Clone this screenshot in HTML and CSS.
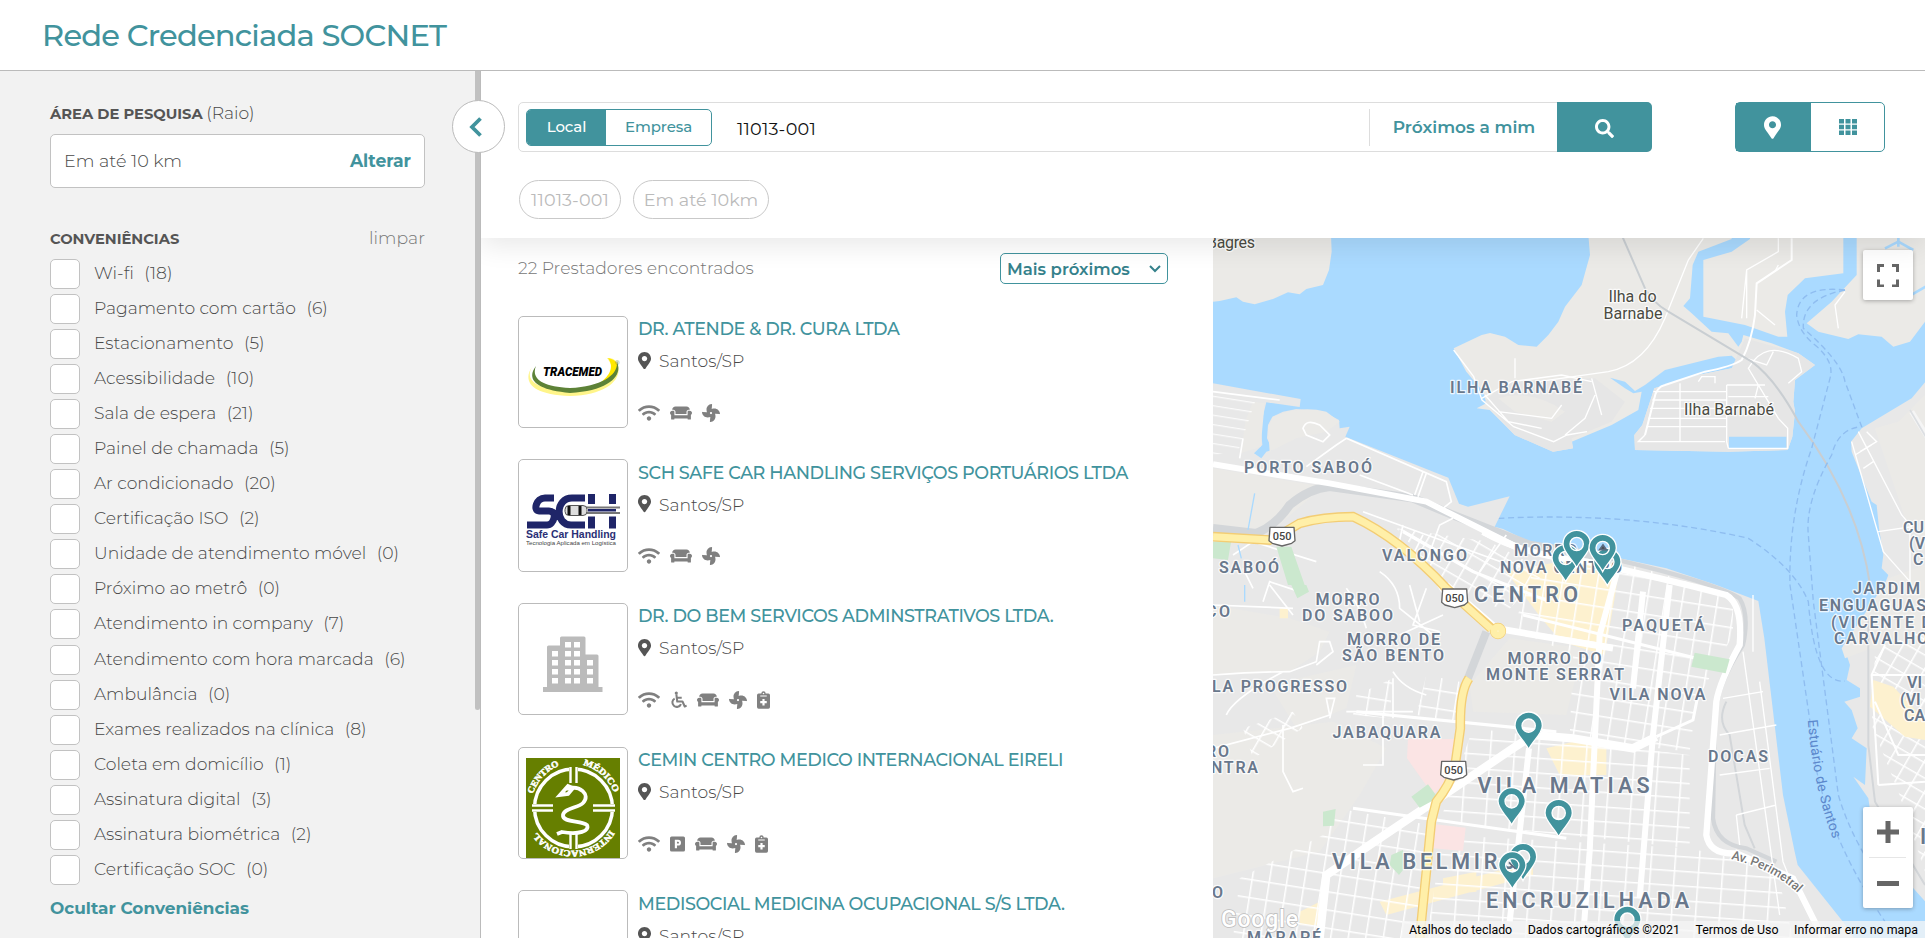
FILE: index.html
```html
<!DOCTYPE html>
<html lang="pt-BR">
<head>
<meta charset="utf-8">
<title>Rede Credenciada SOCNET</title>
<link rel="stylesheet" href="styles.css">
</head>
<body>
<svg class="defs" aria-hidden="true">
  <symbol id="i-pin" viewBox="0 0 384 512"><path d="M172.268 501.67C26.97 291.031 0 269.413 0 192 0 85.961 85.961 0 192 0s192 85.961 192 192c0 77.413-26.97 99.031-172.268 309.67-9.535 13.774-29.93 13.773-39.464 0zM192 272c44.183 0 80-35.817 80-80s-35.817-80-80-80-80 35.817-80 80 35.817 80 80 80z"/></symbol>
  <symbol id="i-wifi" viewBox="0 0 640 512"><path d="M634.91 154.88C457.74-8.99 182.19-8.93 5.09 154.88c-6.66 6.16-6.79 16.59-.35 22.98l34.24 33.97c6.14 6.1 16.02 6.23 22.4.38 145.92-133.68 371.3-133.71 517.25 0 6.38 5.85 16.26 5.71 22.4-.38l34.24-33.97c6.43-6.39 6.3-16.82-.36-22.98zM320 352c-35.35 0-64 28.65-64 64s28.65 64 64 64 64-28.65 64-64-28.65-64-64-64zm202.67-83.59c-115.26-101.93-290.21-101.82-405.34 0-6.9 6.1-7.12 16.69-.57 23.15l34.44 33.99c6 5.92 15.66 6.32 22.05.8 83.95-72.57 209.74-72.41 293.49 0 6.39 5.52 16.05 5.13 22.05-.8l34.44-33.99c6.56-6.46 6.33-17.06-.56-23.15z"/></symbol>
  <symbol id="i-couch" viewBox="0 0 640 512"><path d="M160 224v64h320v-64c0-35.3 28.7-64 64-64h32c0-53-43-96-96-96H160c-53 0-96 43-96 96h32c35.3 0 64 28.7 64 64zm416-32h-32c-17.7 0-32 14.3-32 32v96H128v-96c0-17.7-14.3-32-32-32H64c-35.3 0-64 28.7-64 64 0 23.6 13 44 32 55.1V432c0 8.8 7.2 16 16 16h64c8.8 0 16-7.2 16-16v-16h384v16c0 8.8 7.2 16 16 16h64c8.8 0 16-7.2 16-16V311.1c19-11.1 32-31.5 32-55.1 0-35.3-28.7-64-64-64z"/></symbol>
  <symbol id="i-fan" viewBox="0 0 512 512"><path d="M352.57 128c-28.09 0-54.09 4.52-77.06 12.86l12.41-123.11C289 7.31 279.81-1.18 269.33.13 189.63 10.13 128 77.64 128 159.43c0 28.09 4.52 54.09 12.86 77.06L17.75 224.08C7.31 223-1.18 232.19.13 242.67c10 79.7 77.51 141.33 159.3 141.33 28.09 0 54.09-4.52 77.06-12.86l-12.41 123.11c-1.05 10.43 8.11 18.93 18.59 17.62 79.7-10 141.33-77.51 141.33-159.3 0-28.09-4.52-54.09-12.86-77.06l123.11 12.41c10.44 1.05 18.93-8.11 17.62-18.59-10-79.7-77.51-141.33-159.3-141.33zM256 288a32 32 0 1 1 32-32 32 32 0 0 1-32 32z"/></symbol>
  <symbol id="i-wheel" viewBox="0 0 512 512"><circle cx="190" cy="48" r="48"/><g fill="none" stroke="currentColor" stroke-width="62" stroke-linejoin="round"><path d="M192 90l26 212h158l68 150 58-26M205 190h148"/><path d="M140 212a134 134 0 1 0 190 166"/></g></symbol>
  <symbol id="i-park" viewBox="0 0 448 512"><path fill-rule="evenodd" d="M48 32h352a48 48 0 0 1 48 48v352a48 48 0 0 1-48 48H48a48 48 0 0 1-48-48V80a48 48 0 0 1 48-48zM144 128v256h64v-80h32a88 88 0 0 0 0-176zm64 60h32a28 28 0 0 1 0 56h-32z"/></symbol>
  <symbol id="i-clip" viewBox="0 0 384 512"><path fill-rule="evenodd" d="M336 64h-80a64 64 0 0 0-128 0H48a48 48 0 0 0-48 48v352a48 48 0 0 0 48 48h288a48 48 0 0 0 48-48V112a48 48 0 0 0-48-48zM192 40a24 24 0 1 1 0 48 24 24 0 0 1 0-48zM96 124h192v28H96zm192 228h-64v64h-64v-64H96v-64h64v-64h64v64h64z"/></symbol>
  <symbol id="i-search" viewBox="0 0 512 512"><path fill-rule="evenodd" d="M505 442.700L405.300 343c-4.500-4.500-10.600-7-17-7H372c27.600-35.300 44-79.700 44-128C416 93.100 322.900 0 208 0S0 93.100 0 208s93.100 208 208 208c48.300 0 92.700-16.400 128-44v16.300c0 6.400 2.500 12.500 7 17l99.700 99.700c9.400 9.400 24.600 9.400 33.900 0l28.300-28.300c9.400-9.400 9.400-24.600.1-34zM208 336c-70.700 0-128-57.200-128-128 0-70.700 57.200-128 128-128 70.700 0 128 57.200 128 128 0 70.700-57.200 128-128 128z"/></symbol>
</svg>

<header class="header"><h1 class="title">Rede Credenciada SOCNET</h1></header>
<div class="body">
  <aside class="sidebar">
    <div class="side-head"><span><b class="side-label area">ÁREA DE PESQUISA</b> <span class="raio">(Raio)</span></span></div>
    <div class="radius"><span class="radius-value">Em até 10 km</span><a class="link alterar">Alterar</a></div>
    <div class="side-head conv"><b class="side-label">CONVENIÊNCIAS</b><a class="clear">limpar</a></div>
    <ul class="checks">
      <li><i></i><span>Wi-fi</span><span>(18)</span></li>
      <li><i></i><span>Pagamento com cartão</span><span>(6)</span></li>
      <li><i></i><span>Estacionamento</span><span>(5)</span></li>
      <li><i></i><span>Acessibilidade</span><span>(10)</span></li>
      <li><i></i><span>Sala de espera</span><span>(21)</span></li>
      <li><i></i><span>Painel de chamada</span><span>(5)</span></li>
      <li><i></i><span>Ar condicionado</span><span>(20)</span></li>
      <li><i></i><span>Certificação ISO</span><span>(2)</span></li>
      <li><i></i><span>Unidade de atendimento móvel</span><span>(0)</span></li>
      <li><i></i><span>Próximo ao metrô</span><span>(0)</span></li>
      <li><i></i><span>Atendimento in company</span><span>(7)</span></li>
      <li><i></i><span>Atendimento com hora marcada</span><span>(6)</span></li>
      <li><i></i><span>Ambulância</span><span>(0)</span></li>
      <li><i></i><span>Exames realizados na clínica</span><span>(8)</span></li>
      <li><i></i><span>Coleta em domicílio</span><span>(1)</span></li>
      <li><i></i><span>Assinatura digital</span><span>(3)</span></li>
      <li><i></i><span>Assinatura biométrica</span><span>(2)</span></li>
      <li><i></i><span>Certificação SOC</span><span>(0)</span></li>
    </ul>
    <a class="link hide">Ocultar Conveniências</a>
    <div class="scrollbar"></div>
    <button class="collapse"><svg width="14" height="22" viewBox="0 0 14 22"><path d="M11.500 2.500L3 11l8.500 8.500" fill="none" stroke="#41939d" stroke-width="3.800"/></svg></button>
  </aside>

  <main class="main">
    <div class="toolbar">
      <div class="search-row">
        <div class="search">
          <div class="seg"><span class="seg-item on">Local</span><span class="seg-item">Empresa</span></div>
          <span class="query">11013-001</span>
          <a class="link near">Próximos a mim</a>
          <button class="go"><svg width="19" height="19"><use href="#i-search"/></svg></button>
        </div>
        <div class="views">
          <span class="view on"><svg width="17" height="23"><use href="#i-pin"/></svg></span>
          <span class="view"><svg width="18" height="16" viewBox="0 0 18 16"><path d="M0 0h5v4.400H0zM6.500 0h5v4.400h-5zM13 0h5v4.400h-5zM0 5.800h5v4.400H0zM6.500 5.800h5v4.400h-5zM13 5.800h5v4.400h-5zM0 11.600h5V16H0zM6.500 11.600h5V16h-5zM13 11.600h5V16h-5z"/></svg></span>
        </div>
      </div>
      <div class="chips"><span class="chip c1">11013-001</span><span class="chip c2">Em até 10km</span></div>
    </div>

    <div class="content">
      <section class="list">
        <div class="list-head"><span class="found">22 Prestadores encontrados</span>
          <span class="sort">Mais próximos<svg width="12" height="8" viewBox="0 0 12 8"><path d="M1 1l5 5 5-5" fill="none" stroke="#35818b" stroke-width="2"/></svg></span></div>

        <article class="card">
          <div class="thumb"><svg width="94" height="94" viewBox="0 0 94 94">
            <path d="M6 38C-3 51 3 66 44 67 82 66 98 49 91 34c-2-4-5-5-10-5 13 16 2 29-37 32C12 61-2 52 6 38z" fill="#fff58a"/>
            <path d="M82 29c5 1 8 3 9 6 3 11-7 17-20 21 12-8 18-17 11-27z" fill="#ffe800"/>
            <path d="M10 37C0 50 9 61 44 64 84 62 97 46 91 33c1 13-15 24-47 26C15 58 5 49 10 37z" fill="#5d8237"/>
            <text x="17" y="47" class="lg-trace" textLength="59" lengthAdjust="spacingAndGlyphs">TRACEMED</text>
            <text x="89" y="36" font-size="6" fill="#5d8237" class="lg">®</text></svg></div>
          <div class="info"><h2 class="name">DR. ATENDE &amp; DR. CURA LTDA</h2>
            <p class="city"><svg width="13" height="17.500"><use href="#i-pin"/></svg>Santos/SP</p>
            <p class="icons"><svg width="22" height="18"><use href="#i-wifi"/></svg><svg width="22" height="18"><use href="#i-couch"/></svg><svg width="18" height="18"><use href="#i-fan"/></svg></p></div>
        </article>

        <article class="card">
          <div class="thumb"><svg width="94" height="94" viewBox="0 0 94 94">
            <g fill="none" stroke="#1f2568" stroke-width="7"><path d="M28 25h-9c-9 0-12 13-6 13h10c9 0 5 14-2 14H1M59 25H46c-17 0-17 27-1 27h14M65.500 21v34.500M86.500 21v34.500M65 38h21"/></g>
            <path d="M60 33.500h34M60 41h34" stroke="#fff" stroke-width="5"/><path d="M60 34.500h34M60 40h34" stroke="#777" stroke-width="1.800"/>
            <rect x="39" y="32.500" width="22" height="10" rx="4" fill="#ddd" stroke="#555"/><path d="M43 33v9M54 33v9" stroke="#111" stroke-width="3"/>
            <text x="0" y="65" class="lg-sch" textLength="90" lengthAdjust="spacingAndGlyphs">Safe Car Handling</text>
            <text x="0" y="72" class="lg-tiny" textLength="90" lengthAdjust="spacingAndGlyphs">Tecnologia Aplicada em Logística</text></svg></div>
          <div class="info"><h2 class="name">SCH SAFE CAR HANDLING SERVIÇOS PORTUÁRIOS LTDA</h2>
            <p class="city"><svg width="13" height="17.500"><use href="#i-pin"/></svg>Santos/SP</p>
            <p class="icons"><svg width="22" height="18"><use href="#i-wifi"/></svg><svg width="22" height="18"><use href="#i-couch"/></svg><svg width="18" height="18"><use href="#i-fan"/></svg></p></div>
        </article>

        <article class="card">
          <div class="thumb"><svg width="94" height="94" viewBox="0 0 94 94">
            <path d="M17 75v-5h4V30q0-1.500 1.500-1.500H34V21q0-1.500 1.500-1.500H58q1.500 0 1.500 1.500v16.500H71q1.500 0 1.500 1.500v31h4v5z" fill="#bbb"/>
            <path fill="#fff" d="M26 34h6v5.500h-6zM26 43h6v5.500h-6zM26 52h6v5.500h-6zM26 61h6v5.500h-6zM39 25h6v5.500h-6zM48 25h6v5.500h-6zM39 34h6v5.500h-6zM48 34h6v5.500h-6zM39 43h6v5.500h-6zM48 43h6v5.500h-6zM39 52h6v5.500h-6zM48 52h6v5.500h-6zM39 61h6v5.500h-6zM48 61h6v5.500h-6zM61 43h6v5.500h-6zM61 52h6v5.500h-6zM61 61h6v5.500h-6z"/></svg></div>
          <div class="info"><h2 class="name">DR. DO BEM SERVICOS ADMINSTRATIVOS LTDA.</h2>
            <p class="city"><svg width="13" height="17.500"><use href="#i-pin"/></svg>Santos/SP</p>
            <p class="icons"><svg width="22" height="18"><use href="#i-wifi"/></svg><svg width="17" height="18"><use href="#i-wheel"/></svg><svg width="22" height="18"><use href="#i-couch"/></svg><svg width="18" height="18"><use href="#i-fan"/></svg><svg width="13" height="18"><use href="#i-clip"/></svg></p></div>
        </article>

        <article class="card">
          <div class="thumb low"><svg width="94" height="100" viewBox="0 0 94 100">
            <path d="M0 0h94v100H0z" fill="#667f00"/>
            <g fill="none" stroke="#fff"><circle cx="47.500" cy="50" r="39" stroke-width="3.500"/></g>
            <path d="M43 9h9v16h-9zM43 75h9v16h-9zM6 46h21v8H6zM67 46h22v8H67z" fill="#667f00"/>
            <path d="M44.500 9v16M50.500 9v16M44.500 75v16M50.500 75v16M6 47.500h21M6 52.500h21M67 47.500h22M67 52.500h22" stroke="#fff" stroke-width="2.400"/>
            <path d="M34 37l8-9 5 2-5 6zM40 31c14-5 25 6 17 14-5 5-19 5-20 12-1 8 19 5 24 10 3 6-8 10-25 7l-5 2" fill="none" stroke="#fff" stroke-width="3.800"/>
            <path id="arcT1" d="M7 36A45 45 0 0 1 35 7" fill="none"/><path id="arcT2" d="M57 7A45 45 0 0 1 89 38" fill="none"/>
            <text class="lg-cem"><textPath href="#arcT1" textLength="40" lengthAdjust="spacingAndGlyphs">CENTRO</textPath></text>
            <text class="lg-cem"><textPath href="#arcT2" textLength="43" lengthAdjust="spacingAndGlyphs">MÉDICO</textPath></text>
            <path id="arcI" d="M84 72A44 44 0 0 1 10 73" fill="none"/>
            <text class="lg-cem"><textPath href="#arcI" textLength="86" lengthAdjust="spacingAndGlyphs">INTERNACIONAL</textPath></text></svg></div>
          <div class="info"><h2 class="name">CEMIN CENTRO MEDICO INTERNACIONAL EIRELI</h2>
            <p class="city"><svg width="13" height="17.500"><use href="#i-pin"/></svg>Santos/SP</p>
            <p class="icons"><svg width="22" height="18"><use href="#i-wifi"/></svg><svg width="15" height="18"><use href="#i-park"/></svg><svg width="22" height="18"><use href="#i-couch"/></svg><svg width="18" height="18"><use href="#i-fan"/></svg><svg width="13" height="18"><use href="#i-clip"/></svg></p></div>
        </article>

        <article class="card">
          <div class="thumb"></div>
          <div class="info"><h2 class="name">MEDISOCIAL MEDICINA OCUPACIONAL S/S LTDA.</h2>
            <p class="city"><svg width="13" height="17.500"><use href="#i-pin"/></svg>Santos/SP</p></div>
        </article>
      </section>

      <section class="map">
        <svg class="map-canvas" width="712" height="700" viewBox="1213 238 712 700">
          <defs>
            <pattern id="g1" width="52" height="54" patternUnits="userSpaceOnUse" patternTransform="rotate(9)"><path d="M0 2h52M2 0v54" stroke="#fff" stroke-width="5"/></pattern>
            <pattern id="g2" width="72" height="44" patternUnits="userSpaceOnUse" patternTransform="rotate(4)"><path d="M0 2h72M2 0v44" stroke="#fff" stroke-width="5"/></pattern>
            <pattern id="g3" width="46" height="40" patternUnits="userSpaceOnUse" patternTransform="rotate(30)"><path d="M0 2h46M2 0v40" stroke="#fff" stroke-width="5"/></pattern>
            <pattern id="g4" width="60" height="28" patternUnits="userSpaceOnUse" patternTransform="rotate(9)"><path d="M0 2h60" stroke="#fff" stroke-width="3"/></pattern>
            <g id="mk"><path fill-rule="evenodd" d="M0 0C-12-26-41-46-41-71A41 41 0 0 1 41-71C41-46 12-26 0 0zM0-91a20 20 0 1 0 0 40 20 20 0 0 0 0-40z" fill="#41939d" stroke="#fff" stroke-width="4"/></g>
            <g id="shield"><path d="M-36-26h72l3 40-10 8-29 8-29-8-10-8z" fill="#fff" stroke="#666" stroke-width="4" stroke-linejoin="round"/><text y="12" class="sh">050</text></g>
          </defs>
          <rect x="1213" y="238" width="712" height="700" fill="#aadaff"/>
          <!-- islands and east shore -->
          <g transform="translate(1565 235) scale(.33333)">
            <path fill="#ebeae7" d="M24 640L-36 650-151 600-226 525-265 520-236 505-245 470-296 410-334 340-250 300-225 294-180 305-140 330-85 335-50 300-20 260 0 215 50 150 75 60 70 0 500 0 500 12 400 50 383 90 375 190 355 213 380 235 440 290 490 295 520 335 530 320 535 300 620 325 700 355 750 390 690 435 685 500 690 530 682 605 668 645 490 650 210 645 208 600 232 570 268 460 400 420 500 400 520 380 500 362 460 365 300 405 240 450 210 468 180 440 135 428 180 460 205 475 230 470 220 525 140 570 20 620z"/>
            <path fill="#e6e6e6" d="M540 310L700 355 750 390 690 435 685 500 690 530 682 605 668 645 490 650 210 645 208 600 232 570 268 460 400 420 500 400zM-240 500L-180 440 90 430 180 500 140 560 20 610 24 640-36 650-151 600z"/>
            <path fill="#ebeae7" d="M-200 490Q-100 460 0 530L-40 560-150 530zM555 0L555 12 500 50 415 75 415 245 540 270 640 305 667 305 660 230 668 180 720 130 835 115 835 0zM875 0V120L800 200 725 265 760 290 850 312 880 298 950 305 985 335 1035 320 1080 260V0z"/>
            <path d="M1090 150l-60 35M960 40l40-20 45 25M1000 5v30" stroke="#aadaff" stroke-width="8" fill="none"/>
            <path fill="#e8e8e8" d="M1090 430L1040 490 890 580 858 620 860 650 920 800 935 810 942 880 955 960 950 1000 970 1020 900 1200 835 1230 855 1290 845 1335 885 1360 885 1385 838 1400 860 1425 878 1480 860 1510 905 1540 900 1650 865 1625 910 1690 920 1760 1045 1960 1090 2010z"/>
            <path fill="#ebeae7" d="M1090 470L1000 560 930 580 1020 850 1090 950zM970 1030l110-40v250l-160 0-80 30-10-30z"/>
            <path fill="#aadaff" d="M492 605h172v35H492z"/>
            <g fill="none" stroke="#fff" stroke-width="4">
              <path d="M415 10L370 75 300 250Q240 390 130 410L-80 440M640 10V50L545 105 530 250M545 105v145M640 90l-8 15M575 225l55 45M240 600L220 620H480M490 640H668V580L640 550 550 400Q600 310 700 370L710 410 670 445M345 445V620M265 470H485M262 495H485M255 520H485M250 550H485M245 575H485M485 450H600M490 485H610M485 450V620L490 640M580 450l-10 40M545 370l60 20 20-40M400 440l10-15h40v20"/>
              <path d="M680 10V75L575 145 570 240Q560 320 530 375 500 395 420 410L300 450Q275 455 268 490L240 600" stroke-width="6"/>
              <path d="M-334 345l60 80 25 70 95 80 120 45 40-20 60-10M-240 480l70 80 100 20M-250 490l90-50 150-20 90 20M-150 430v-60M-200 530l160 20 30-40M80 430l30 110M0 600l60-50 30-70"/>
              <path d="M880 590l130 250 30 35-100 15M860 620l95 330 80 90M870 660l50-30M895 700l30-20M905 590l30 30-50 30M1035 880v170"/>
              <path d="M840 170l-30 40 10 70"/>
            </g>
            <path d="M170 0L240 160Q260 200 310 230L560 380Q630 430 700 560 880 800 915 1050" fill="none" stroke="#c9ced2" stroke-width="6"/>
            <path d="M1040 530l50 80" stroke="#f5f5f5" stroke-width="16"/><path d="M1035 525l50 85" stroke="#dcdfe2" stroke-width="5"/>
            <g fill="none" stroke="#8fbdf0" stroke-width="4" stroke-dasharray="18 11">
              <path d="M840 165Q700 150 695 240 700 290 750 330 810 380 795 430L740 640Q670 840 675 1050L735 1460"/>
              <path d="M840 165Q710 190 715 280 830 380 840 440L890 575Q820 580 800 660 720 800 730 900L745 1100 820 1680Q870 1850 1000 2000"/>
              <path d="M-200 850Q200 830 550 910 690 1000 730 1100 750 1350 840 1338M735 1460Q750 1750 960 2060"/>
            </g>
          </g>
          <!-- Santos -->
          <g transform="translate(1213 235) scale(.33333)">
            <path fill="#ebeae7" d="M0 0H354L356 50 348 105 330 150 280 162 260 178 225 172 180 192 125 208 90 200 70 187 20 198 0 200z"/>
            <path fill="#e8e8e8" d="M0 445L263 492 260 516 160 502 143 570 148 630 123 655 145 670 160 650 178 645 162 610 165 570 178 545 210 530 250 522 330 530 378 555 380 580 410 575 397 605 706 728 738 806 765 815 890 784 845 875 870 882 945 918 1056 950 1220 970 1360 1000 1510 1050 1636 1098 1654 1210 1710 1680 1745 1850 1754 1890 1890 2060 1930 2120H0z"/>
            <path fill="#ebeae7" d="M180 545Q260 510 340 530L380 560 340 590 250 610 170 650 165 580zM0 700L330 755 180 885 0 890zM120 500l35 5-12 130-60 20 15-100z"/>
            <path fill="#ebeae7" d="M0 1110L230 1150 350 1190 320 1250 230 1310 0 1320zM0 1500L360 1460 520 1540 440 1680 320 1850 0 1930zM890 1210L1110 1240 1060 1440 780 1430 770 1350zM170 1350L430 1290 400 1420 250 1480z"/>
            <path fill="#fdf1cf" d="M880 1010l160-30 180 10-15 100-30 170-130-40-60-70zM1000 1540l80-20 100 20v80l-140 0zM500 2000l460-120 0 40-440 120zM260 2030l60-30-5 70-55 0zM690 1930l100-20v60l-100 10zM200 1120h25v30h-25z"/>
            <g stroke="none">
              <path fill="url(#g1)" d="M370 1720L650 1770 620 2110H60L80 1930 330 1800z"/>
              <path fill="url(#g2)" d="M690 1800L1430 1840 1690 1900 1740 2110H640z"/>
              <path fill="url(#g2)" d="M780 1480L1430 1560 1430 1840 680 1760z"/>
              <path fill="url(#g1)" d="M960 1010L1220 980 1560 1080 1560 1200 1450 1400 1430 1550 1070 1510 1080 1260 900 1180z"/>
              <path fill="url(#g1)" d="M430 1380L540 1330 530 1450 420 1440zM640 1320l100 20-10 120-120-20z"/>
              <path fill="url(#g3)" d="M550 880L830 920 1000 1010 880 1130 700 1050zM90 1480l150-50 30 50-150 90z"/>
              <path fill="url(#g4)" d="M0 465L130 490 75 650 0 660z"/>
            </g>
            <path fill="#fbe4e4" d="M585 1512H725L700 1640 660 1680 582 1570zM668 1768l90 10-8 70-90-8z"/>
            <g fill="none" stroke="#d3d6d9">
              <path d="M0 880L130 895Q190 870 230 810 290 760 350 755L600 790 720 840 950 930 1170 965" stroke-width="26"/>
              <path d="M1170 965Q1500 1040 1580 1090 1610 1140 1590 1230 1510 1350 1505 1450L1500 1750Q1510 1830 1600 1840L1690 1880" stroke-width="13"/>
              <path d="M820 1190L765 1330" stroke-width="24"/>
              <path d="M1540 1400q-30 60 10 100l45 270 30 70" stroke-width="6"/>
            </g>
            <g fill="none" stroke="#fff">
              <path d="M0 688L350 745 640 800 930 945" stroke-width="18"/>
              <path d="M810 890Q930 960 1120 980 1350 1030 1540 1080 1590 1110 1580 1230 1520 1340 1510 1400L1495 1600 1480 1800Q1490 1860 1570 1855L1740 1930 1830 2110" stroke-width="19"/>
              <path d="M930 945L810 890M700 1050L850 1180 1200 1240" stroke-width="20"/>
              <path d="M320 2110L340 1920 470 1830 900 1540 960 1500 1080 1510 1260 1540 1330 1505" stroke-width="25"/>
              <path d="M948 1540L890 2060M1215 1000L1160 1200 1130 1850 1110 2110M1370 1050L1320 1500 1280 1990M1290 1070L1260 1360" stroke-width="18"/>
              <path d="M570 890l210 120 230 90M430 1430l600 60M930 1140l520 130M420 1720l640 90M1330 1505l110-50 20-100" stroke-width="9"/>
              <path d="M400 610L700 740 715 800 690 820M280 695L370 630 400 610M270 580Q280 550 320 570L350 600 330 620 280 600zM450 830L890 990M440 720L600 780M630 710l-25 70M640 715l-25 70M0 470L200 495M90 610l-10 60M550 960l20-90M600 960l30-60M640 980L680 870 720 850M880 900l-80 110M60 960l60-40 190 60M90 1000l30 60M150 1100l20-60 90 30M170 1050l70 90" stroke-width="5"/>
              <path d="M0 1320Q140 1310 230 1310L310 1280 320 1220 350 1220 360 1250 310 1290M40 1440Q60 1390 210 1310M0 1540L230 1480 350 1440 340 1390 365 1390 350 1450M210 1470l0 140 30 60 30-10M400 1430h200M540 1330v120M510 1440v150h-60M0 1110L240 1120M400 1060q40 50 60 120M500 1010q60 40 60 110l100 80M640 1060l-40 110 80 20M560 1200l130-60M540 1310q30 50 100 70M650 1010l60 100M590 1050l30 110" stroke-width="5"/>
              <path d="M1590 1250l110 790M1640 1340l70 540 20 50M1520 1500l170-30M1520 1620l150-20M1570 1740l120-30M1570 1740l10 90M1530 1390l120-20M1620 1080v170" stroke-width="4"/>
            </g>
            <path fill="#cbe8ce" d="M595 1685l50-37 30 40-55 30zM330 1730l38-8-5 50-33 2zM535 1860l35-15v60l-12 15-28-30zM0 920l55-5-10 60-45-5zM190 935h45l40 115h-50zM235 1050l45 0 8 20-35 20zM1445 1253l105 20-12 42-103-20z"/>
            <g fill="none" stroke="#f3cd74" stroke-width="29"><path d="M0 905L170 915Q220 890 260 865 330 845 420 845 560 910 700 1060L835 1180M768 1330Q740 1370 742 1480L725 1600Q710 1650 670 1700L655 1760 620 2110"/><circle cx="855" cy="1188" r="10"/></g>
            <g fill="none" stroke="#ffefa8" stroke-width="21"><path d="M0 905L170 915Q220 890 260 865 330 845 420 845 560 910 700 1060L835 1182M768 1330Q740 1370 742 1480L725 1600Q710 1650 670 1700L655 1760 620 2110"/><circle cx="855" cy="1188" r="12"/></g>
            <path d="M125 775l-20 110M75 930l10 40M95 1050v50" stroke="#aadaff" stroke-width="4"/>
          </g>
          <g transform="translate(1565 585) scale(.33333)">
            <path fill="url(#g3)" d="M930 200L1080 130V860L1000 620 920 420z"/>
            <path fill="#fdf1cf" d="M925 285l60 20 95 100v60l-60-10-105-90z"/>
            <path d="M910 100V480L930 650 1080 900" stroke="#d3d6d9" stroke-width="6" fill="none"/>
            <path d="M960 180l-40 90 20 330M920 270h160M930 350l70 160h80M940 600l140-10" stroke="#fff" stroke-width="6" fill="none"/>
            <path id="estu" d="M728 405Q745 610 806 768" fill="none"/>
            <text class="wt"><textPath href="#estu" textLength="366">Estuário de Santos</textPath></text>
            <path id="perim" d="M498 822Q620 850 700 925" fill="none"/>
            <text class="rd"><textPath href="#perim" textLength="228">Av. Perimetral</textPath></text>
          </g>
          <g class="pl">
            <text x="1207" y="248" textLength="48">Bagres</text><text x="1608.500" y="302" textLength="48">Ilha do</text><text x="1603.500" y="318.500" textLength="59">Barnabe</text><text x="1684" y="415" textLength="90">Ilha Barnabé</text>
          </g>
          <g class="nb">
            <text x="1450" y="392.500" textLength="132">ILHA BARNABÉ</text><text x="1244" y="473" textLength="128">PORTO SABOÓ</text><text x="1219" y="572.500" textLength="60">SABOÓ</text><text x="1382" y="561" textLength="85">VALONGO</text>
            <text x="1514" y="556" textLength="63">MORRO</text><text x="1500" y="572.500" textLength="122">NOVA CENTRO</text>
            <text x="1622" y="631" textLength="83">PAQUETÁ</text><text x="1315.500" y="604.500" textLength="64">MORRO</text><text x="1302" y="621" textLength="91">DO SABOO</text>
            <text x="1347" y="645" textLength="93">MORRO DE</text><text x="1342" y="661" textLength="102">SÃO BENTO</text><text x="1507.500" y="663.500" textLength="94">MORRO DO</text><text x="1486" y="680" textLength="138">MONTE SERRAT</text>
            <text x="1609.500" y="700" textLength="96">VILA NOVA</text><text x="1206" y="617" textLength="24">CO</text><text x="1212" y="692" textLength="135">LA PROGRESSO</text><text x="1206" y="757" textLength="23">RO</text><text x="1211" y="773" textLength="47">NTRA</text>
            <text x="1332.500" y="738" textLength="108">JABAQUARA</text><text x="1708" y="762" textLength="60">DOCAS</text><text x="1212" y="898" textLength="12">O</text><text x="1247" y="943" textLength="74">MARAPÉ</text>
            <text x="1903" y="533">CU</text><text x="1909" y="549">(V</text><text x="1913" y="565">C</text><text x="1853" y="594" textLength="67">JARDIM</text><text x="1819" y="611" textLength="107">ENGUAGUAS</text><text x="1831" y="627.500" textLength="101">(VICENTE D</text><text x="1834" y="643.500" textLength="94">CARVALHO</text>
            <text x="1907" y="688">VI</text><text x="1900" y="705">(VI</text><text x="1904" y="721">CA</text>
          </g>
          <g class="nb big">
            <text x="1474" y="602" textLength="104">CENTRO</text><text x="1477.500" y="793" textLength="172">VILA MATIAS</text><text x="1332" y="869" textLength="184">VILA BELMIRO</text><text x="1486" y="908" textLength="203">ENCRUZILHADA</text><text x="1920" y="844">I</text>
          </g>
          <text x="1221" y="927" class="goog" textLength="77">Google</text>
          <g transform="translate(1213 235) scale(.33333)">
            <use href="#shield" x="207" y="903"/><use href="#shield" x="725" y="1088"/><use href="#shield" x="722" y="1605"/>
            <use href="#mk" x="1058" y="1040"/><use href="#mk" x="1183" y="1052"/><use href="#mk" x="1091" y="998"/><use href="#mk" x="1169" y="1010"/>
            <use href="#mk" x="947" y="1543"/><use href="#mk" x="896" y="1770"/><use href="#mk" x="1037" y="1805"/><use href="#mk" x="930" y="1937"/><use href="#mk" x="898" y="1962"/><use href="#mk" x="1243" y="2125"/>
            <path d="M888 1882l20 20M1160 944h20l-10-14z" stroke="#5c6b80" stroke-width="5"/>
          </g>
        </svg>
        <button class="ctl full"><svg width="22" height="23" viewBox="0 0 22 23"><path d="M7 1.500H1.500V8M15 1.500h5.500V8M1.500 15.500V22H7M20.500 15.500V22H15" fill="none" stroke="#666" stroke-width="3"/></svg></button>
        <div class="ctl zoom"><svg width="50" height="101" viewBox="0 0 50 101"><path d="M14 25h22M25 14v22M14 76.500h22" stroke="#666" stroke-width="5"/><path d="M6 50.500h37" stroke="#e6e6e6"/></svg></div>
        <div class="attrib"><span>Atalhos do teclado</span><span>Dados cartográficos ©2021</span><span>Termos de Uso</span><span>Informar erro no mapa</span></div>
      </section>
    </div>
  </main>
</div>
</body>
</html>
```
FILE: styles.css
```css
* { box-sizing: border-box; }
body { margin: 0; width: 1925px; height: 938px; overflow: hidden; background: #fff; color: #484848; font-family: Montserrat, Inter, "Open Sans", sans-serif; font-size: 17.200px; font-weight: 300; }
h1, h2, p, ul { margin: 0; padding: 0; font-weight: inherit; }
button { padding: 0; border: 0; }
svg { display: block; fill: currentColor; flex: none; }
.defs { position: absolute; width: 0; height: 0; }

.header { height: 71px; border-bottom: 1px solid #bbb; padding-left: 42px; }
.title { font-size: 30.500px; line-height: 71px; font-weight: 500; color: #41939d; letter-spacing: -.77px; }
.body { display: flex; height: 867px; }

.sidebar { position: relative; width: 481px; padding: 28px 55px 0 50px; background: #f2f2f2; border-right: 1px solid #bbb; }
.side-head { display: flex; justify-content: space-between; align-items: baseline; height: 28px; line-height: 28px; white-space: nowrap; }
.side-label { font-size: 14.700px; font-weight: 700; color: #555; }
.raio { font-size: 17.200px; margin-left: -1px; }
.radius { display: flex; justify-content: space-between; align-items: center; height: 54px; margin-top: 7px; padding: 0 13px 1px; line-height: 20px; background: #fff; border: 1px solid #c2c2c2; border-radius: 5px; }
.radius-value { font-size: 17.600px; }
.link { color: #41939d; font-weight: 700; }
.conv { margin-top: 36px; }
.clear { color: #777; font-size: 17.300px; }
.checks { list-style: none; margin-top: 7px; }
.checks li { display: flex; height: 35.060px; line-height: 27px; white-space: nowrap; }
.checks i { width: 30px; height: 30px; margin-right: 14px; background: #fff; border: 1px solid #c2c2c2; border-radius: 5px; }
.checks span + span { margin-left: 10.500px; }
.hide { display: block; line-height: 36px; font-size: 16.900px; }
.scrollbar { position: absolute; top: 0; right: 0; width: 5px; height: 639px; background: #c1c1c1; border-radius: 0 0 3px 3px; }
.collapse { position: absolute; z-index: 3; top: 29px; right: -25px; width: 53px; height: 53px; display: flex; align-items: center; justify-content: center; background: #fff; border: 1px solid #bbb; border-radius: 50%; padding-right: 6px; }

.main { flex: 1; display: flex; flex-direction: column; min-width: 0; }
.toolbar { position: relative; z-index: 2; height: 167px; padding: 31px 40px 0 37px; background: #fff; box-shadow: 0 8px 25px rgba(0,0,0,.09); clip-path: inset(0 0 -40px 0); }
.search-row { display: flex; justify-content: space-between; }
.search { display: flex; width: 1134px; height: 50px; border: 1px solid #ddd; border-radius: 5px; align-items: center; }
.seg { display: flex; width: 186px; height: 37px; margin-left: 7px; border: 1px solid #41939d; border-radius: 5px; overflow: hidden; font-size: 15px; font-weight: 500; line-height: 34px; color: #41939d; text-align: center; }
.seg-item { flex: 1 1 104px; letter-spacing: -.1px; }
.seg-item.on { flex: 0 0 79px; background: #41939d; color: #fff; }
.query { flex: 1; margin-left: 25px; padding-top: 3px; color: #111; font-size: 17.600px; font-weight: 400; letter-spacing: .2px; }
.near { width: 189px; height: 37px; line-height: 36px; border-left: 1px solid #ddd; text-align: center; font-size: 17px; font-weight: 600; }
.go { align-self: stretch; width: 95px; margin: -1px; display: flex; align-items: center; justify-content: center; padding-top: 2px; background: #41939d; color: #fff; border-radius: 0 5px 5px 0; }
.views { display: flex; width: 150px; height: 50px; border: 1px solid #41939d; border-radius: 5px; color: #41939d; }
.view { flex: 1; display: flex; align-items: center; justify-content: center; }
.view.on { flex: 0 0 75px; padding-right: 2px; background: #41939d; color: #fff; }
.chips { display: flex; gap: 12px; margin: 28px 0 0 1px; }
.chip { height: 39px; line-height: 38px; border: 1px solid #c9c9c9; border-radius: 20px; color: #bbb; font-size: 17.600px; font-weight: 400; text-align: center; white-space: nowrap; }
.c1 { width: 102px; letter-spacing: .1px; } .c2 { width: 136px; }

.content { display: flex; flex: 1; min-height: 0; }
.list { width: 732px; padding: 15px 45px 0 37px; overflow: hidden; }
.list-head { display: flex; justify-content: space-between; align-items: center; height: 31px; margin-bottom: 31.500px; color: #777; }
.found { padding-bottom: 2px; }
.sort { display: flex; align-items: center; justify-content: space-between; width: 168px; height: 31px; padding: 0 6px; border: 1px solid #41939d; border-radius: 5px; color: #35818b; font-size: 16.500px; font-weight: 600; }
.card { display: flex; height: 143.700px; }
.thumb { display: flex; align-items: center; justify-content: center; width: 110px; height: 112.500px; padding-top: 9px; border: 1px solid #bbb; border-radius: 5px; overflow: hidden; }
.thumb.low { align-items: flex-end; padding-top: 0; }
.info { padding: .5px 0 0 10px; }
.name { font-size: 17.600px; line-height: 26px; font-weight: 500; color: #41939d; letter-spacing: -.41px; white-space: nowrap; }
.city { display: flex; align-items: center; gap: 8px; margin-top: 6.500px; height: 24px; }
.city svg { color: #555; }
.icons { display: flex; gap: 10px; margin-top: 31px; color: #808080; }

.lg { font-family: "Liberation Sans", sans-serif; }
.lg-trace { font: italic 900 12px "Roboto", sans-serif; fill: #000; }
.lg-sch { font: 700 10.500px "Liberation Sans", sans-serif; fill: #2a2f75; }
.lg-tiny { font: 400 5.500px "Liberation Sans", sans-serif; fill: #444; }
.lg-cem { font: 700 9px "Liberation Serif", serif; fill: #fff; stroke: #fff; stroke-width: .5px; }

.map { position: relative; width: 712px; height: 700px; overflow: hidden; font-family: Roboto, sans-serif; }
.pl, .nb { font: 500 16px Roboto, sans-serif; fill: #4a4b43; stroke: #fff; stroke-width: 2.500px; stroke-opacity: .8; paint-order: stroke; stroke-linejoin: round; }
.pl { font-weight: 400; }
.nb { font-size: 16px; font-weight: 600; fill: #69788c; }
.nb.big { font-size: 21.500px; }
.sh { font: 500 33px Roboto, sans-serif; fill: #444; text-anchor: middle; }
.wt { font: 400 42px Roboto, sans-serif; fill: #5c88cc; }
.rd { font: 500 38px Roboto, sans-serif; fill: #777; stroke: #fff; stroke-width: 8px; paint-order: stroke; }
.goog { font: 500 23px Roboto, sans-serif; fill: #fff; stroke: #bbb; stroke-width: 1.500px; paint-order: stroke; }
.ctl { position: absolute; right: 12px; width: 50px; background: #fff; border-radius: 2px; box-shadow: 0 1px 4px rgba(0,0,0,.3); }
.full { top: 12px; height: 50px; display: flex; align-items: center; justify-content: center; }
.zoom { bottom: 30px; height: 101px; }
.attrib { position: absolute; right: 0; bottom: 0; display: flex; gap: 15.500px; height: 17px; padding: 0 7px; background: rgba(245,245,245,.75); color: #000; font-size: 12.400px; line-height: 17px; font-weight: 400; white-space: nowrap; }
```
